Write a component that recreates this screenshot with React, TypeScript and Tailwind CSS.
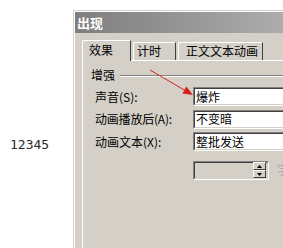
import React from "react";

const cjk = { fontFamily: '"Noto Sans CJK SC", "Noto Sans", sans-serif' };

function Sunken({ children, className = "", inner = "bg-white" }: { children?: React.ReactNode; className?: string; inner?: string }) {
  return (
    <div className={`border-t border-l border-[#808080] border-b border-r border-b-white border-r-white ${className}`}>
      <div className={`h-full border-t border-l border-[#404040] border-b border-r border-b-[#d4d0c8] border-r-[#d4d0c8] ${inner} flex items-center`}>
        {children}
      </div>
    </div>
  );
}

function SpinBtn({ up }: { up?: boolean }) {
  return (
    <div className="w-[13px] h-[8px] bg-[#d4d0c8] border-t border-l border-white border-b border-r border-b-[#404040] border-r-[#404040] flex items-center justify-center">
      <svg width="5" height="3" viewBox="0 0 5 3">
        {up ? <polygon points="2.5,0 5,3 0,3" fill="#000" /> : <polygon points="0,0 5,0 2.5,3" fill="#000" />}
      </svg>
    </div>
  );
}

export default function App() {
  return (
    <div className="relative w-[283px] h-[248px] bg-white flex overflow-hidden" style={cjk}>
      <div className="w-[73px] shrink-0 pl-[10px] pt-[130px]">
        <span className="text-[13px] text-[#2a2a2a]" style={{ fontFamily: '"DejaVu Sans Mono", monospace' }}>
          12345
        </span>
      </div>
      <div className="w-[260px] h-[260px] shrink-0 mt-[10px] border-t border-l border-[#d4d0c8] bg-[#d4d0c8]">
        <div className="h-full border-t border-l border-white">
          <div className="h-[21px] bg-gradient-to-r from-[#7e7e7e] to-[#b8b8b8] flex items-center pl-[2px]">
            <span className="text-[13px] font-bold text-white leading-none">出现</span>
          </div>
          <div className="ml-[7px] mt-[7px]">
            <div className="flex items-end h-[20px] text-[12px] text-black">
              <div className="relative z-10 -mb-px h-[21px] w-[49px] bg-[#d4d0c8] border-t border-l border-white border-r border-r-[#404040] rounded-tl-[2px] pl-[6px] pt-[2px] leading-[14px]">
                效果
              </div>
              <div className="ml-[2px] h-[18px] w-[43px] border-t border-l border-white border-r border-r-[#404040] rounded-tl-[2px] pl-[3px] pt-[1px] leading-[14px]">
                计时
              </div>
              <div className="ml-[2px] h-[18px] w-[85px] border-t border-l border-white border-r border-r-[#404040] rounded-tl-[2px] pl-[7px] pt-[1px] leading-[14px]">
                正文文本动画
              </div>
            </div>
            <div className="border-t border-l border-white h-[200px] text-[12px] text-black">
              <div className="flex items-center mt-[7px] pl-[8px] h-[14px]">
                <span className="leading-[14px]">增强</span>
                <div className="flex-1 ml-[5px] mt-px border-t border-[#808080] border-b border-b-white" />
              </div>
              <div className="mt-[5px] pl-[12px] flex flex-col gap-[3.5px]">
                <div className="flex items-center h-[19px]">
                  <span className="w-[98px] shrink-0 leading-[14px]">声音(S):</span>
                  <Sunken className="flex-1 h-[19px]">
                    <span className="pl-[1px] leading-[14px]">爆炸</span>
                  </Sunken>
                </div>
                <div className="flex items-center h-[19px]">
                  <span className="w-[98px] shrink-0 leading-[14px] tracking-[-0.2px]">动画播放后(A):</span>
                  <Sunken className="flex-1 h-[19px]">
                    <span className="pl-[1px] leading-[14px]">不变暗</span>
                  </Sunken>
                </div>
                <div className="flex items-center h-[19px]">
                  <span className="w-[98px] shrink-0 leading-[14px]">动画文本(X):</span>
                  <Sunken className="flex-1 h-[19px]">
                    <span className="pl-[1px] leading-[14px]">整批发送</span>
                  </Sunken>
                </div>
                <div className="flex items-center h-[19px] mt-[6px]">
                  <span className="w-[98px] shrink-0" />
                  <Sunken className="w-[76px] h-[19px]" inner="bg-[#d4d0c8] justify-end">
                    <div className="flex flex-col mr-[1px]">
                      <SpinBtn up />
                      <SpinBtn />
                    </div>
                  </Sunken>
                  <span className="ml-[8px] text-[#a8a8a8] leading-[14px]">字</span>
                </div>
              </div>
            </div>
          </div>
        </div>
      </div>
      <svg className="absolute left-0 top-0 pointer-events-none" width="283" height="248">
        <line x1="150" y1="70" x2="186" y2="91" stroke="#d62020" strokeWidth="1" />
        <polygon points="193,95 186.4,86.5 182.4,93.5" fill="#d62020" />
      </svg>
    </div>
  );
}
